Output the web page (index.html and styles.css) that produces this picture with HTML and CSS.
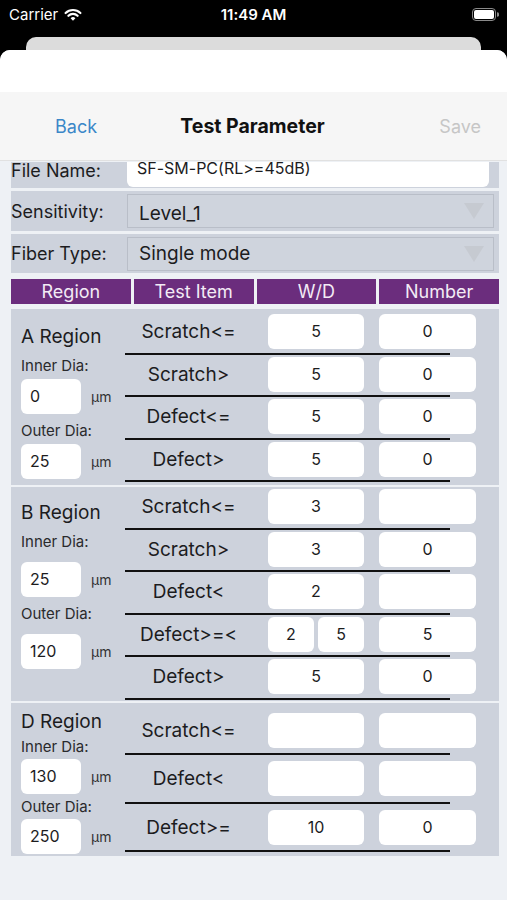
FILE: index.html
```html
<!DOCTYPE html>
<html lang="en">

<head>
    <meta charset="UTF-8">
    <meta name="viewport" content="width=device-width, initial-scale=1.0">
    <title>Test Parameter</title>
    <link rel="stylesheet" href="styles.css">
</head>

<body>
    <!-- Status bar -->
    <div class="status">
        <div class="carrier">
            Carrier
            <svg class="wifi" width="18" height="13" viewBox="0 0 18 13">
                <path d="M1.6 5 A10.6 10.6 0 0 1 16.4 5" stroke="#fff" stroke-width="2.2" fill="none" stroke-linecap="round"/>
                <path d="M4.4 7.8 A6.6 6.6 0 0 1 13.6 7.8" stroke="#fff" stroke-width="2.2" fill="none" stroke-linecap="round"/>
                <path d="M6.6 10.3 A3.4 3.4 0 0 1 11.4 10.3 L9 12.8 Z" fill="#fff"/>
            </svg>
        </div>
        <div class="clock">11:49 AM</div>
        <div class="battery">
            <svg width="27" height="13" viewBox="0 0 27 13">
                <rect x="0.5" y="0.5" width="23" height="12" rx="3.5" fill="none" stroke="#8a8a8a"/>
                <rect x="2" y="2" width="20" height="9" rx="2" fill="#fff"/>
                <path d="M25 4.3 A2 2 0 0 1 25 8.7 Z" fill="#8a8a8a"/>
            </svg>
        </div>
    </div>

    <div class="back-card"></div>

    <!-- Sheet -->
    <div class="sheet">
        <div class="sheet-top"></div>
        <header class="navbar">
            <a href="#" class="nav-back">Back</a>
            <div class="nav-title">Test Parameter</div>
            <a href="#" class="nav-save">Save</a>
        </header>

        <main class="content">
            <div class="form-row file-row">
                <label>File Name:</label>
                <div class="file-input">SF-SM-PC(RL&gt;=45dB)</div>
            </div>
            <div class="form-row sens-row">
                <label>Sensitivity:</label>
                <div class="select"><span>Level_1</span><i class="arrow"></i></div>
            </div>
            <div class="form-row fiber-row">
                <label>Fiber Type:</label>
                <div class="select"><span>Single mode</span><i class="arrow"></i></div>
            </div>

            <div class="table-head">
                <div>Region</div>
                <div>Test Item</div>
                <div>W/D</div>
                <div>Number</div>
            </div>

            <!-- A Region -->
            <section class="region region-a">
                <div class="region-info">
                    <div class="region-name">A Region</div>
                    <div class="dia-label">Inner Dia:</div>
                    <div class="dia-row"><div class="dia-input">0</div><span>µm</span></div>
                    <div class="dia-label">Outer Dia:</div>
                    <div class="dia-row"><div class="dia-input">25</div><span>µm</span></div>
                </div>
                <div class="items">
                    <div class="item">
                        <div class="cells"><div class="item-name">Scratch&lt;=</div><div class="box wd">5</div><div class="box num">0</div></div>
                        <div class="rule"></div>
                    </div>
                    <div class="item">
                        <div class="cells"><div class="item-name">Scratch&gt;</div><div class="box wd">5</div><div class="box num">0</div></div>
                        <div class="rule"></div>
                    </div>
                    <div class="item">
                        <div class="cells"><div class="item-name">Defect&lt;=</div><div class="box wd">5</div><div class="box num">0</div></div>
                        <div class="rule"></div>
                    </div>
                    <div class="item">
                        <div class="cells"><div class="item-name">Defect&gt;</div><div class="box wd">5</div><div class="box num">0</div></div>
                        <div class="rule"></div>
                    </div>
                </div>
            </section>

            <!-- B Region -->
            <section class="region region-b">
                <div class="region-info">
                    <div class="region-name">B Region</div>
                    <div class="dia-label">Inner Dia:</div>
                    <div class="dia-row"><div class="dia-input">25</div><span>µm</span></div>
                    <div class="dia-label">Outer Dia:</div>
                    <div class="dia-row"><div class="dia-input">120</div><span>µm</span></div>
                </div>
                <div class="items">
                    <div class="item">
                        <div class="cells"><div class="item-name">Scratch&lt;=</div><div class="box wd">3</div><div class="box num"></div></div>
                        <div class="rule"></div>
                    </div>
                    <div class="item">
                        <div class="cells"><div class="item-name">Scratch&gt;</div><div class="box wd">3</div><div class="box num">0</div></div>
                        <div class="rule"></div>
                    </div>
                    <div class="item">
                        <div class="cells"><div class="item-name">Defect&lt;</div><div class="box wd">2</div><div class="box num"></div></div>
                        <div class="rule"></div>
                    </div>
                    <div class="item">
                        <div class="cells">
                            <div class="item-name">Defect&gt;=&lt;</div>
                            <div class="wd-split"><div class="box">2</div><div class="box">5</div></div>
                            <div class="box num">5</div>
                        </div>
                        <div class="rule"></div>
                    </div>
                    <div class="item">
                        <div class="cells"><div class="item-name">Defect&gt;</div><div class="box wd">5</div><div class="box num">0</div></div>
                        <div class="rule"></div>
                    </div>
                </div>
            </section>

            <!-- D Region -->
            <section class="region region-d">
                <div class="region-info">
                    <div class="region-name">D Region</div>
                    <div class="dia-label">Inner Dia:</div>
                    <div class="dia-row"><div class="dia-input">130</div><span>µm</span></div>
                    <div class="dia-label">Outer Dia:</div>
                    <div class="dia-row"><div class="dia-input">250</div><span>µm</span></div>
                </div>
                <div class="items">
                    <div class="item">
                        <div class="cells"><div class="item-name">Scratch&lt;=</div><div class="box wd"></div><div class="box num"></div></div>
                        <div class="rule"></div>
                    </div>
                    <div class="item">
                        <div class="cells"><div class="item-name">Defect&lt;</div><div class="box wd"></div><div class="box num"></div></div>
                        <div class="rule"></div>
                    </div>
                    <div class="item">
                        <div class="cells"><div class="item-name">Defect&gt;=</div><div class="box wd">10</div><div class="box num">0</div></div>
                        <div class="rule"></div>
                    </div>
                </div>
            </section>
        </main>
    </div>
</body>

</html>
```

FILE: styles.css
```css
body {
    font-family: Inter, "Noto Sans", sans-serif;
    font-feature-settings: "calt" 0;
    margin: 0;
    padding: 0;
    background-color: #000;
    color: #1c1c1e;
    width: 507px;
    height: 900px;
    overflow: hidden;
}

/* Status bar */
.status {
    height: 28px;
    display: flex;
    align-items: center;
    justify-content: space-between;
    padding: 0 9px;
    color: #fff;
    font-size: 15px;
    position: relative;
}

.carrier {
    display: flex;
    align-items: center;
    gap: 6px;
}

.clock {
    position: absolute;
    left: 0;
    right: 0;
    text-align: center;
    font-weight: 600;
}

.battery {
    display: flex;
    margin-right: -1px;
}

.back-card {
    height: 13px;
    margin: 9px 26px 0 26px;
    background-color: #dcdcdc;
    border-radius: 10px 10px 0 0;
}

/* Sheet */
.sheet {
    background-color: #eef1f5;
    border-radius: 10px 10px 0 0;
    overflow: hidden;
    height: 850px;
}

.sheet-top {
    height: 42px;
    background-color: #fff;
}

.navbar {
    height: 68px;
    display: grid;
    grid-template-columns: 1fr auto 1fr;
    align-items: center;
    padding: 0 26px 0 55px;
    background-color: #f6f6f6;
    border-bottom: 1px solid #e1e1e1;
    font-size: 18px;
}

.navbar a {
    text-decoration: none;
}

.nav-back {
    color: #3b87c8;
}

.nav-title {
    font-weight: 700;
    font-size: 19.5px;
    color: #111;
    margin-left: -31px;
}

.nav-save {
    color: #c6c6c6;
    justify-self: end;
}

/* Content */
.content {
    margin: 0 8px 0 11px;
    padding-top: 1px;
    display: flex;
    flex-direction: column;
}

.form-row {
    display: flex;
    align-items: center;
    background-color: #cdd2dc;
    font-size: 18px;
}

.form-row label {
    width: 116px;
    flex-shrink: 0;
}

.file-row {
    height: 26px;
    align-items: flex-end;
    overflow: hidden;
}

.file-row label {
    line-height: 34px;
}

.file-input {
    width: 352px;
    height: 36px;
    line-height: 34px;
    padding-left: 10px;
    margin-bottom: 1px;
    background-color: #fff;
    border-radius: 6px;
    font-size: 16px;
}

.sens-row {
    height: 40px;
    margin-top: 3px;
}

.fiber-row {
    height: 39px;
    margin-top: 3px;
}

.select {
    width: 367px;
    height: 34px;
    display: flex;
    align-items: center;
    justify-content: space-between;
    border: 1px solid #b9bec8;
    background-color: #cfd4dd;
    padding: 0 9px 0 11px;
    box-sizing: border-box;
    font-size: 19px;
}

.sens-row .select span {
    margin-top: 5px;
}

.arrow {
    width: 0;
    height: 0;
    border-left: 10px solid transparent;
    border-right: 10px solid transparent;
    border-top: 16px solid #c6cad1;
}

/* Table header */
.table-head {
    display: grid;
    grid-template-columns: repeat(4, 1fr);
    gap: 3px;
    height: 25px;
    margin-top: 6px;
}

.table-head div {
    background-color: #6b2d7d;
    color: #f3ebf5;
    font-size: 18px;
    text-align: center;
    line-height: 25px;
}

/* Regions */
.region {
    display: flex;
    background-color: #cdd2dc;
}

.region-a {
    margin-top: 5px;
    padding: 3px 0 3px;
}

.region-b {
    margin-top: 2px;
    padding: 0 0 1px;
}

.region-d {
    margin-top: 2px;
    padding: 4px 0 0;
    height: 149px;
    overflow: hidden;
}

.region-info {
    width: 114px;
    flex-shrink: 0;
    padding-left: 10px;
    box-sizing: border-box;
}

.region-name {
    font-size: 19px;
    line-height: 24px;
}

.dia-label {
    font-size: 15px;
    line-height: 20px;
    color: #2a2a2c;
}

.dia-row {
    display: flex;
    align-items: center;
    gap: 10px;
    font-size: 14px;
    color: #333;
}

.dia-input {
    width: 60px;
    height: 35px;
    line-height: 35px;
    padding-left: 9px;
    box-sizing: border-box;
    background-color: #fff;
    border-radius: 6px;
    font-size: 16px;
    color: #1c1c1e;
}

.region-a .region-name { margin-top: 13px; }
.region-a .dia-label { margin-top: 7px; }
.region-a .dia-row { margin-top: 3px; }

.region-b .region-name { margin-top: 14px; }
.region-b .dia-label { margin-top: 7px; }
.region-b .dia-row { margin-top: 10px; }

.region-d .region-name { margin-top: 3px; }
.region-d .dia-label { margin-top: 3px; }
.region-d .dia-row { margin-top: 2px; }

.items {
    display: flex;
    flex-direction: column;
}

.item {
    height: 42.5px;
    display: flex;
    flex-direction: column;
}

.region-d .item {
    height: 48.5px;
}

.cells {
    display: flex;
    align-items: center;
    padding-top: 2px;
}

.region-d .cells {
    padding-top: 6px;
}

.item-name {
    width: 127px;
    margin-right: 16px;
    text-align: center;
    font-size: 19px;
}

.box {
    height: 35px;
    line-height: 35px;
    background-color: #fff;
    border-radius: 6px;
    text-align: center;
    font-size: 16px;
}

.wd {
    width: 96px;
}

.num {
    width: 97px;
    margin-left: 15px;
}

.wd-split {
    width: 96px;
    display: flex;
    gap: 4px;
}

.wd-split .box {
    flex: 1;
}

.rule {
    width: 325px;
    height: 2px;
    background-color: #111;
    margin-top: auto;
}
```
